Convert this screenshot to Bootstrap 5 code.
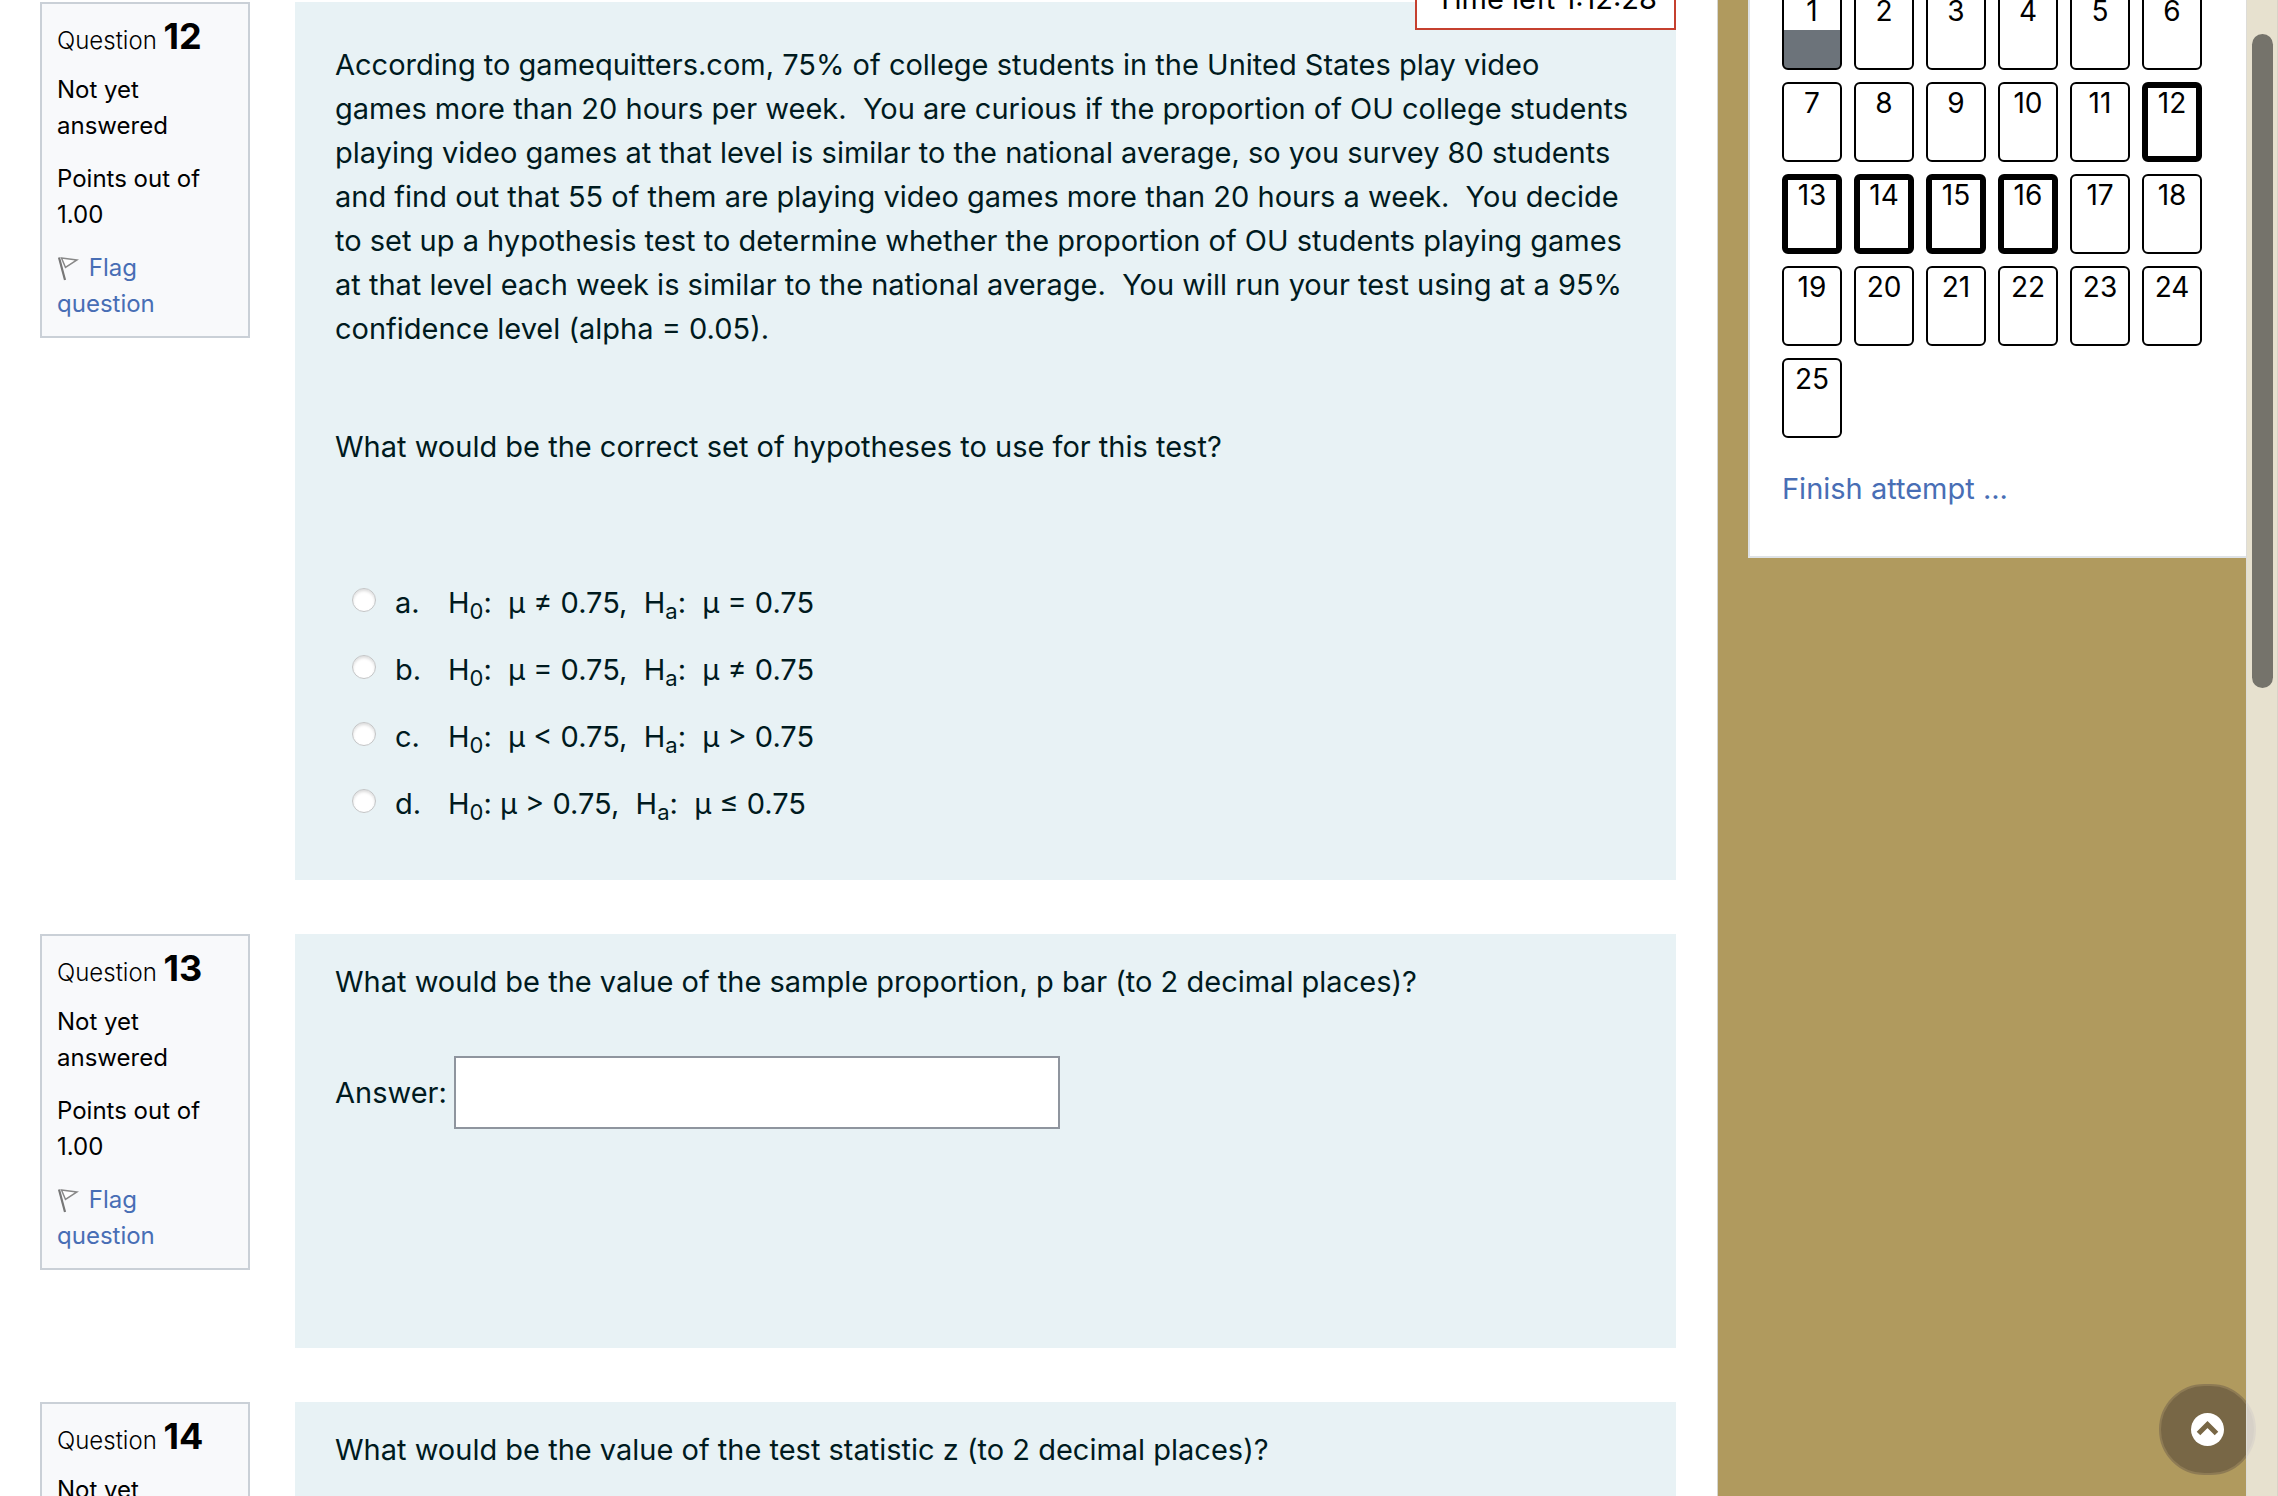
<!DOCTYPE html>
<html lang="en">
<head>
<meta charset="utf-8">
<meta name="viewport" content="width=device-width, initial-scale=1">
<title>Quiz attempt</title>
<link href="https://cdn.jsdelivr.net/npm/bootstrap@5.3.0/dist/css/bootstrap.min.css" rel="stylesheet">
<style>
body { font-family: Inter, "Liberation Sans", sans-serif; font-size: 29px; line-height: 44px; color: #000; background: #fff; }
a { color: #486eb5; text-decoration: none; }
.quiz-main { padding: 2px 41px 0 40px; gap: 54px; min-width: 0; }
.question { gap: 45px; }
.q-info { width: 210px; padding: 14px 15px 14px; border: 2px solid #cad0d7; background: #f8f9fb; font-size: 24px; line-height: 36px; }
.q-info h3 { font-size: 24px; line-height: 36px; font-weight: 300; margin: 0 0 13px; }
.q-info h3 span { font-size: 36px; font-weight: 700; }
.q-info p { margin-bottom: 17px; }
.q-info p:last-child { margin-bottom: 0; }
.q-info svg { margin-right: 3px; }
.q-body { padding: 26px 40px; background: #e8f2f5; color: #001a1e; min-width: 0; }
.q-long { padding-top: 41px; }
.q-long p { margin-bottom: 74px; }
.q-long p + p { margin-bottom: 112px; }
.options { gap: 23px; padding-left: 17px; padding-bottom: 28px; }
.q-body .form-check-input { width: 24px; height: 24px; margin: 7px 19px 0 0; border: 1px solid #c3c5c6; box-shadow: inset 0 2px 3px #ddd; }
.opt-letter { width: 53px; }
.options sub { font-size: 22px; line-height: 0; bottom: -6px; }
.answer-row { margin-top: 52px; gap: 7px; padding-bottom: 193px; }
.answer-row .form-control { width: 606px; height: 73px; border: 2px solid #8f959e; border-radius: 0; font-size: 29px; }
.quiz-timer { top: -46px; right: 41px; padding: 21px 17px 7px 19px; border: 2px solid #c5402f; background: #fff; }
.quiz-side { width: 561px; padding: 0 32px 0 30px; border-left: 1px solid #d5d5d0; background: #b09a5e; }
.nav-block { padding: 0 32px 45px; border: 2px solid #dee2e6; border-top: 0; border-right: 0; margin-top: -10px; background: #fff; }
.q-grid { display: grid; grid-template-columns: repeat(6, 60px); gap: 12px; margin-bottom: 29px; }
.q-grid a { height: 80px; border: 2px solid #000; border-radius: 6px; color: #000; font-size: 28px; line-height: 38px; text-align: center; overflow: hidden; }
.q-grid a.on-page { border-width: 6px; line-height: 30px; }
.q-grid a.saved { background: linear-gradient(#fff 38px, #6c737a 38px); }
.scroll-track { width: 32px; background: rgba(255,255,255,.7); border-left: 1px solid #dddcd8; border-right: 1px solid #d8d2c8; z-index: 3; padding: 34px 4px 0 5px; }
.scroll-thumb { height: 654px; border-radius: 11px; background: #75736b; }
.to-top { right: 22px; bottom: 21px; width: 97px; height: 91px; border: 2px solid #8e7b54; border-radius: 46px; background: #786746; z-index: 2; }
</style>
<script src="https://cdn.jsdelivr.net/npm/bootstrap@5.3.0/dist/js/bootstrap.bundle.min.js"></script>
</head>
<body>
<svg class="d-none">
  <symbol id="flag" viewBox="0 0 22 26"><path d="M2 1.500 L8 24" fill="none" stroke="#777" stroke-width="2.200"/><path d="M4.500 2 L20 4 L8.500 11.500 Z" fill="#fff" stroke="#888" stroke-width="1.500"/></symbol>
</svg>
<div class="d-flex vh-100 overflow-hidden position-relative">
  <main class="quiz-main d-flex flex-column flex-grow-1 position-relative">
    <div class="quiz-timer position-absolute" role="timer">Time left 1:12:28</div>

    <section class="question d-flex align-items-start">
      <div class="q-info flex-shrink-0">
        <h3>Question <span>12</span></h3>
        <p>Not yet answered</p>
        <p>Points out of 1.00</p>
        <p><a href="#"><svg width="22" height="26" aria-hidden="true"><use href="#flag"/></svg> Flag question</a></p>
      </div>
      <div class="q-body q-long flex-grow-1">
        <p>According to gamequitters.com, 75% of college students in the United States play video<br>games more than 20 hours per week.&nbsp; You are curious if the proportion of OU college students<br>playing video games at that level is similar to the national average, so you survey 80 students<br>and find out that 55 of them are playing video games more than 20 hours a week.&nbsp; You decide<br>to set up a hypothesis test to determine whether the proportion of OU students playing games<br>at that level each week is similar to the national average.&nbsp; You will run your test using at a 95%<br>confidence level (alpha = 0.05).</p>
        <p>What would be the correct set of hypotheses to use for this test?</p>
        <div class="options d-flex flex-column">
          <div class="d-flex"><input class="form-check-input flex-shrink-0" type="radio" name="q12" id="q12a"><label class="d-flex" for="q12a"><span class="opt-letter">a.</span><span>H<sub>0</sub>:&nbsp; μ ≠ 0.75,&nbsp; H<sub>a</sub>:&nbsp; μ = 0.75</span></label></div>
          <div class="d-flex"><input class="form-check-input flex-shrink-0" type="radio" name="q12" id="q12b"><label class="d-flex" for="q12b"><span class="opt-letter">b.</span><span>H<sub>0</sub>:&nbsp; μ = 0.75,&nbsp; H<sub>a</sub>:&nbsp; μ ≠ 0.75</span></label></div>
          <div class="d-flex"><input class="form-check-input flex-shrink-0" type="radio" name="q12" id="q12c"><label class="d-flex" for="q12c"><span class="opt-letter">c.</span><span>H<sub>0</sub>:&nbsp; μ &lt; 0.75,&nbsp; H<sub>a</sub>:&nbsp; μ &gt; 0.75</span></label></div>
          <div class="d-flex"><input class="form-check-input flex-shrink-0" type="radio" name="q12" id="q12d"><label class="d-flex" for="q12d"><span class="opt-letter">d.</span><span>H<sub>0</sub>: μ &gt; 0.75,&nbsp; H<sub>a</sub>:&nbsp; μ ≤ 0.75</span></label></div>
        </div>
      </div>
    </section>

    <section class="question d-flex align-items-start">
      <div class="q-info flex-shrink-0">
        <h3>Question <span>13</span></h3>
        <p>Not yet answered</p>
        <p>Points out of 1.00</p>
        <p><a href="#"><svg width="22" height="26" aria-hidden="true"><use href="#flag"/></svg> Flag question</a></p>
      </div>
      <div class="q-body flex-grow-1">
        <div>What would be the value of the sample proportion, p bar (to 2 decimal places)?</div>
        <div class="answer-row d-flex align-items-center">
          <label for="q13">Answer:</label>
          <input class="form-control" type="text" id="q13">
        </div>
      </div>
    </section>

    <section class="question d-flex align-items-start">
      <div class="q-info flex-shrink-0">
        <h3>Question <span>14</span></h3>
        <p>Not yet answered</p>
        <p>Points out of 1.00</p>
        <p><a href="#"><svg width="22" height="26" aria-hidden="true"><use href="#flag"/></svg> Flag question</a></p>
      </div>
      <div class="q-body flex-grow-1">
        <div>What would be the value of the test statistic z (to 2 decimal places)?</div>
        <div class="answer-row d-flex align-items-center">
          <label for="q14">Answer:</label>
          <input class="form-control" type="text" id="q14">
        </div>
      </div>
    </section>
  </main>

  <aside class="quiz-side flex-shrink-0">
    <div class="nav-block">
      <nav class="q-grid" aria-label="Quiz navigation">
        <a href="#" class="saved">1</a><a href="#">2</a><a href="#">3</a><a href="#">4</a><a href="#">5</a><a href="#">6</a>
        <a href="#">7</a><a href="#">8</a><a href="#">9</a><a href="#">10</a><a href="#">11</a><a href="#" class="on-page">12</a>
        <a href="#" class="on-page">13</a><a href="#" class="on-page">14</a><a href="#" class="on-page">15</a><a href="#" class="on-page">16</a><a href="#">17</a><a href="#">18</a>
        <a href="#">19</a><a href="#">20</a><a href="#">21</a><a href="#">22</a><a href="#">23</a><a href="#">24</a>
        <a href="#">25</a>
      </nav>
      <a href="#">Finish attempt ...</a>
    </div>
  </aside>

  <button type="button" class="to-top position-absolute d-flex align-items-center justify-content-center p-0" aria-label="Back to top">
    <svg width="33" height="33" viewBox="0 0 33 33"><circle cx="16.500" cy="16.500" r="16.500" fill="#fff"/><path d="M7.500 20.500 L16.500 11.500 L25.500 20.500" fill="none" stroke="#786746" stroke-width="5"/></svg>
  </button>
  <div class="scroll-track position-absolute top-0 bottom-0 end-0"><div class="scroll-thumb"></div></div>
</div>
</body>
</html>
